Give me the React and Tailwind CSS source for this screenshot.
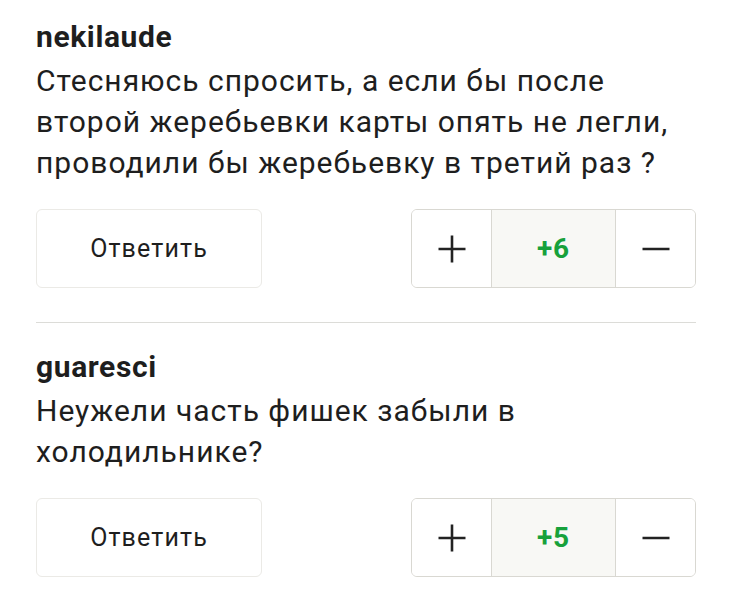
import { useState } from 'react';

const comments = [
  {
    user: 'nekilaude',
    lines: [
      'Стесняюсь спросить, а если бы после',
      'второй жеребьевки карты опять не легли,',
      'проводили бы жеребьевку в третий раз ?',
    ],
    score: 6,
  },
  {
    user: 'guaresci',
    lines: ['Неужели часть фишек забыли в', 'холодильнике?'],
    score: 5,
  },
];

function Comment({ user, lines, score }) {
  return (
    <div>
      <div className="text-[30px] leading-[32px] font-bold tracking-[0.02em] text-[#1e1e1e]">{user}</div>
      <p className="mt-[7px] whitespace-nowrap text-[30px] leading-[41px] tracking-[0.033em] text-[#1e1e1e]">
        {lines.map((l, i) => (
          <span key={i} className="block">
            {l}
          </span>
        ))}
      </p>
      <div className="mt-[26px] flex items-center justify-between">
        <button className="flex h-[79px] w-[226px] items-center justify-center rounded-[6px] border border-[#ebeae6] bg-white text-[25px] tracking-[0.045em] text-[#1e1e1e]">
          Ответить
        </button>
        <div className="flex h-[79px] w-[285px] overflow-hidden rounded-[6px] border border-[#d9d8d2]">
          <button className="flex w-[79px] items-center justify-center bg-white">
            <svg width="28" height="28" viewBox="0 0 28 28">
              <path d="M14 0.5v27M0.5 14h27" stroke="#222" strokeWidth="2.6" />
            </svg>
          </button>
          <div className="flex flex-1 items-center justify-center border-x border-[#d9d8d2] bg-[#f8f8f5] text-[28px] font-bold tracking-[0.03em] text-[#17a13b]">
            +{score}
          </div>
          <button className="flex w-[79px] items-center justify-center bg-white">
            <svg width="28" height="4" viewBox="0 0 28 4">
              <path d="M0.5 2h27" stroke="#222" strokeWidth="2.6" />
            </svg>
          </button>
        </div>
      </div>
    </div>
  );
}

export default function App() {
  const [items] = useState(comments);
  return (
    <div className="min-h-[591px] bg-white px-[36px] pt-[21px] font-['Roboto',sans-serif]">
      <div className="w-[660px]">
        {items.map((c, i) => (
          <div key={c.user}>
            {i > 0 && <div className="mt-[34px] mb-[28px] h-px bg-[#dcdcd8]" />}
            <Comment {...c} />
          </div>
        ))}
      </div>
    </div>
  );
}
